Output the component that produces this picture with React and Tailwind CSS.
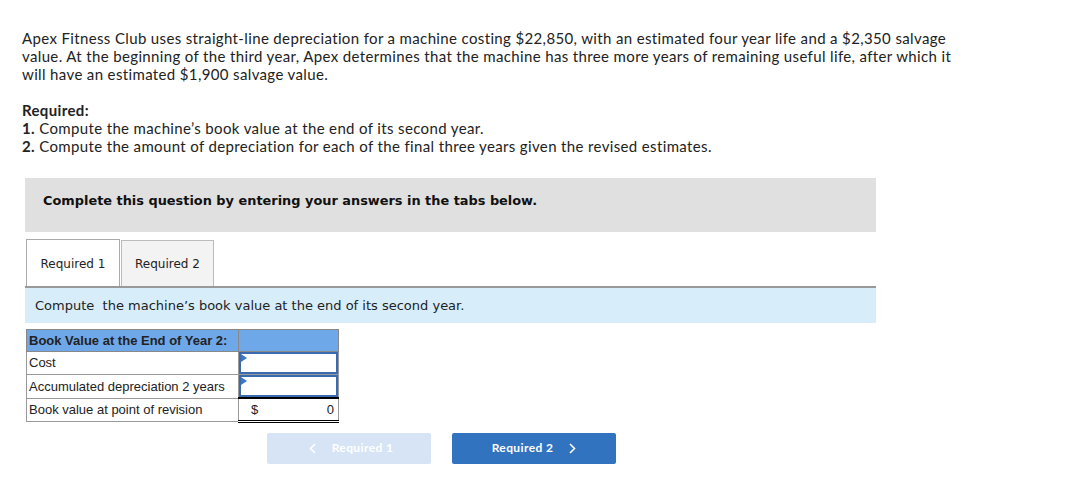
export default function App() {
  return (
    <div className="bg-white w-[1081px] h-[482px] overflow-hidden">
      <div className="pl-[22px] pt-[29px] text-[15px] leading-[18px] tracking-[0.36px] text-[#222] font-['Lato',sans-serif]">
        <p className="w-[942px]">
          Apex Fitness Club uses straight-line depreciation for a machine costing $22,850, with an estimated four year life and a $2,350 salvage value. At the beginning of the third year, Apex determines that the machine has three more years of remaining useful life, after which it will have an estimated $1,900 salvage value.
        </p>
        <p className="mt-[18px] font-bold">Required:</p>
        <p><b>1.</b> Compute the machine’s book value at the end of its second year.</p>
        <p><b>2.</b> Compute the amount of depreciation for each of the final three years given the revised estimates.</p>
      </div>

      <div className="ml-[25px] mt-[23px] w-[851px]">
        <div className="h-[54px] bg-[#e0e0e0] pl-[18px] pt-[13px] font-['DejaVu_Sans',sans-serif] font-bold text-[12.9px] text-[#111]">
          Complete this question by entering your answers in the tabs below.
        </div>

        <div className="mt-[7px] flex pl-[1px] border-b-2 border-[#999]">
          <div className="w-[94px] h-[47px] -mb-[2px] bg-white border border-[#aaa] border-b-0 flex items-center justify-center pt-[2px] font-['DejaVu_Sans',sans-serif] text-[12px] text-[#222]">
            Required 1
          </div>
          <div className="ml-[1px] mt-[1px] w-[93px] h-[46px] bg-[#f3f3f3] border border-[#bbb] border-b-0 flex items-center justify-center pt-[1px] font-['DejaVu_Sans',sans-serif] text-[12px] text-[#222]">
            Required 2
          </div>
        </div>

        <div className="h-[35px] bg-[#d7eefa] pl-[10px] flex items-center font-['DejaVu_Sans',sans-serif] text-[13px] text-[#222]">
          Compute&nbsp; the machine’s book value at the end of its second year.
        </div>

        <table className="mt-[6px] ml-[1px] border-collapse font-['Liberation_Sans',sans-serif] text-[13px] text-[#222]">
          <tbody>
            <tr className="h-[22px] bg-[#6fa8e9]">
              <td className="w-[212px] border border-[#888] pl-[2px] font-bold">Book Value at the End of Year 2:</td>
              <td className="w-[100px] border border-[#888]"></td>
            </tr>
            <tr className="h-[23px]">
              <td className="border border-[#999] pl-[2px]">Cost</td>
              <td className="border border-[#999] p-0">
                <InputCell />
              </td>
            </tr>
            <tr className="h-[23px]">
              <td className="border border-[#999] pl-[2px]">Accumulated depreciation 2 years</td>
              <td className="border border-[#999] p-0">
                <InputCell />
              </td>
            </tr>
            <tr className="h-[23px]">
              <td className="border border-[#999] pl-[2px]">Book value at point of revision</td>
              <td className="border-t-2 border-t-black border-b-[3px] border-b-black border-double border-r border-r-[#999] p-0">
                <div className="flex justify-between pl-[12px] pr-[4px]">
                  <span>$</span>
                  <span>0</span>
                </div>
              </td>
            </tr>
          </tbody>
        </table>

        <div className="mt-[10px] ml-[242px] flex gap-[21px] font-['Lato',sans-serif] font-bold text-[12px] tracking-[0.4px] text-white">
          <div className="w-[164px] h-[31px] rounded-[2px] bg-[#d6e4f5] flex items-center justify-center gap-[16px] pl-[4px]">
            <Chev left />
            <span>Required 1</span>
          </div>
          <div className="w-[164px] h-[31px] rounded-[2px] bg-[#3273bf] flex items-center justify-center gap-[16px]">
            <span>Required 2</span>
            <Chev />
          </div>
        </div>
      </div>
    </div>
  );
}

function InputCell() {
  return (
    <div className="relative h-[22px] border-2 border-[#3a6bb0] bg-white">
      <svg className="absolute left-0 top-0" width="6" height="8" viewBox="0 0 6 8">
        <polygon points="0,0 6,4 0,8" fill="#3a78c9" />
      </svg>
    </div>
  );
}

function Chev({ left }) {
  return (
    <svg width="7" height="11" viewBox="0 0 7 11" fill="none" stroke="white" strokeWidth="1.6">
      {left ? <polyline points="6,1 1.5,5.5 6,10" /> : <polyline points="1,1 5.5,5.5 1,10" />}
    </svg>
  );
}
